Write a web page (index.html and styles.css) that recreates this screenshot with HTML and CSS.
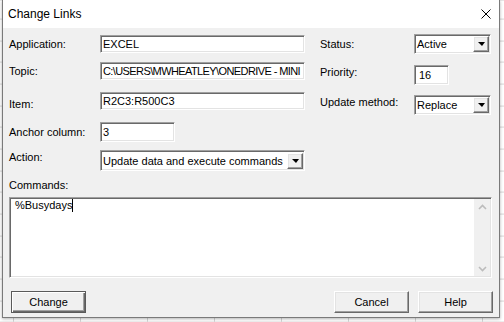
FILE: index.html
```html
<!DOCTYPE html>
<html lang="en">
<head>
    <meta charset="UTF-8">
    <title>Change Links</title>
    <link rel="stylesheet" href="styles.css">
</head>
<body>
<div class="dialog">
    <div class="titlebar">
        <span class="title">Change Links</span>
        <svg class="close" width="10" height="10" viewBox="0 0 10 10"><path d="M0.5 0.5L9.5 9.5M9.5 0.5L0.5 9.5" stroke="#000" stroke-width="1" fill="none"/></svg>
    </div>
    <div class="content">
        <div class="top">
            <div class="col-left">
                <div class="row row-app"><span class="lbl">Application:</span><div class="field w-wide">EXCEL</div></div>
                <div class="row row-topic"><span class="lbl">Topic:</span><div class="field w-wide tight">C:\USERS\MWHEATLEY\ONEDRIVE - MINI</div></div>
                <div class="row row-item"><span class="lbl lbl-low">Item:</span><div class="field w-wide">R2C3:R500C3</div></div>
                <div class="row row-anchor"><span class="lbl">Anchor column:</span><div class="field w-short">3</div></div>
                <div class="row row-action"><span class="lbl lbl-high">Action:</span>
                    <div class="field combo w-wide"><span>Update data and execute commands</span><span class="dd"><i class="arrow"></i></span></div>
                </div>
            </div>
            <div class="col-right">
                <div class="row row-status"><span class="lbl">Status:</span>
                    <div class="field combo w-combo"><span>Active</span><span class="dd"><i class="arrow"></i></span></div>
                </div>
                <div class="row row-priority"><span class="lbl lbl-high2">Priority:</span><div class="field w-num">16</div></div>
                <div class="row row-method"><span class="lbl lbl-high2">Update method:</span>
                    <div class="field combo w-combo"><span>Replace</span><span class="dd"><i class="arrow"></i></span></div>
                </div>
            </div>
        </div>
        <div class="cmd-label">Commands:</div>
        <div class="field memo">
            <div class="memo-text">%Busydays<span class="caret"></span></div>
            <div class="vscroll">
                <svg width="9" height="6" viewBox="0 0 9 6"><polyline points="1,5 4.5,1.5 8,5" fill="none" stroke="#bcbcbc" stroke-width="1.6"/></svg>
                <svg width="9" height="6" viewBox="0 0 9 6"><polyline points="1,1 4.5,4.5 8,1" fill="none" stroke="#bcbcbc" stroke-width="1.6"/></svg>
            </div>
        </div>
        <div class="buttons">
            <div class="btn btn-default">Change</div>
            <div class="btn btn-cancel">Cancel</div>
            <div class="btn">Help</div>
        </div>
    </div>
</div>
</body>
</html>
```

FILE: styles.css
```css
*{margin: 0;padding: 0;box-sizing: border-box;}
html,body{width: 504px;height: 322px;overflow: hidden;}
body{
    font-family: "Liberation Sans", Arial, sans-serif;
    font-size: 11px;
    color: #000;
    background-color: #fff;
    background-image:
        repeating-linear-gradient(to bottom, #d6d6d6 0 1px, transparent 1px 21.67px),
        repeating-linear-gradient(to right, #d6d6d6 0 1px, transparent 1px 67px);
    background-position: 0 18.6px, 13px 0;
}
.dialog{
    margin-left: 2px;
    width: 498px;
    height: 318px;
    border: 1px solid #7a7a7a;
    border-top: none;
    background: #f0f0f0;
    box-shadow: 0 1px 3px rgba(0,0,0,0.3);
}
.titlebar{
    height: 28px;
    background: #fff;
    display: flex;
    align-items: center;
    justify-content: space-between;
    padding: 0 8px 0 5px;
}
.title{font-size: 12px;}
.content{padding: 0 7px 0 6px;}
.top{
    display: grid;
    grid-template-columns: 296px 171px;
    column-gap: 15px;
    align-items: start;
}
.row{display: flex;align-items: center;}
.lbl{width: 91px;flex: none;white-space: nowrap;}
.col-right .lbl{width: 94px;}
.lbl-low{margin-top: 6px;}
.lbl-high{margin-bottom: 8px;}
.lbl-high2{margin-bottom: 6px;}

.row-app{margin-top: 7px;height: 18px;}
.row-topic{margin-top: 9px;height: 18px;}
.row-item{margin-top: 12px;height: 18px;}
.row-anchor{margin-top: 12px;height: 20px;}
.row-action{margin-top: 8px;height: 21px;}
.row-status{margin-top: 6px;height: 20px;}
.row-priority{margin-top: 11px;height: 20px;}
.row-method{margin-top: 10px;height: 20px;}

.field{
    height: 100%;
    background: #fff;
    border: 1px solid;
    border-color: #a0a0a0 #fff #fff #a0a0a0;
    box-shadow: inset 1px 1px #696969, inset -1px -1px #e3e3e3;
    display: flex;
    align-items: center;
    padding: 0 2px;
    white-space: nowrap;
    overflow: hidden;
}
.tight{letter-spacing: -0.6px;}
.w-wide{width: 205px;}
.w-short{width: 75px;}
.w-combo{width: 77px;}
.w-num{width: 35px;padding-left: 4px;}
.combo{justify-content: space-between;padding-right: 1px;}
.dd{
    flex: none;
    width: 16px;
    height: 16px;
    background: #f0f0f0;
    border: 1px solid;
    border-color: #fff #696969 #696969 #fff;
    box-shadow: inset -1px -1px #a0a0a0, inset 1px 1px #e3e3e3;
    display: flex;
    align-items: center;
    justify-content: center;
}
.arrow{
    width: 0;
    height: 0;
    border-left: 4px solid transparent;
    border-right: 3px solid transparent;
    border-top: 4px solid #000;
    margin-left: 1px;
}

.cmd-label{
    margin-top: 7px;
    height: 14px;
    line-height: 14px;
}
.memo{
    margin-top: 5px;
    height: 81px;
    padding: 0;
    align-items: stretch;
}
.memo-text{
    flex: 1;
    line-height: 13px;
    padding: 1px 0 0 5px;
}
.caret{
    display: inline-block;
    width: 1px;
    height: 13px;
    background: #000;
    vertical-align: top;
}
.vscroll{
    width: 16px;
    margin: 1px 1px 1px 0;
    background: #f0f0f0;
    display: flex;
    flex-direction: column;
    justify-content: space-between;
    align-items: center;
    padding: 5px 0 4px;
}

.buttons{
    margin-top: 13px;
    margin-right: -1px;
    padding-left: 2px;
    display: flex;
    gap: 9px;
}
.btn{
    width: 75px;
    height: 22px;
    display: flex;
    align-items: center;
    justify-content: center;
    background: #f0f0f0;
    border: 1px solid;
    border-color: #fff #696969 #696969 #fff;
    box-shadow: inset -1px -1px #a0a0a0, inset 1px 1px #e3e3e3;
}
.btn-default{
    border-color: #5a5a5a;
    box-shadow: inset 1px 1px #fff, inset -1px -1px #696969, inset -2px -2px #a0a0a0;
}
.btn-cancel{margin-left: auto;}
```
